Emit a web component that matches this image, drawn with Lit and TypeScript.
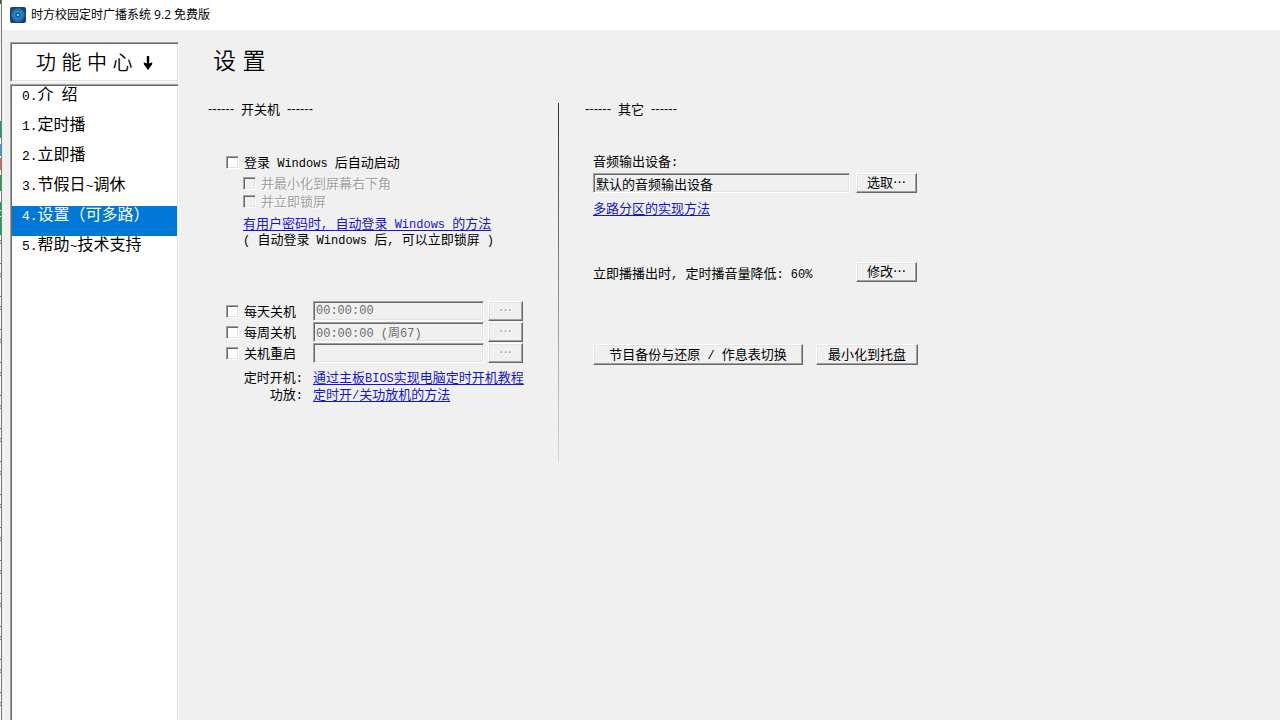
import { LitElement, html, css, TemplateResult } from "lit";
import { customElement, property, state } from "lit/decorators.js";

/** Splits a caption into CJK and ASCII runs, so that ASCII is set in the narrow monospace face. */
const mixed = (text: string): TemplateResult[] =>
  text
    .split(/([\x20-\x7e]+)/)
    .filter((run) => run !== "")
    .map((run) => (/^[\x20-\x7e]/.test(run) ? html`<span class="latin">${run}</span>` : html`<span>${run}</span>`));

const shared = css`
  .latin {
    font-family: "Liberation Mono", monospace;
    font-size: 12px;
    line-height: 1;
    white-space: pre;
  }
  a {
    color: #1414d8;
    text-decoration: underline;
    text-underline-offset: 2px;
  }
`;

@customElement("win-button")
class WinButton extends LitElement {
  @property() label = "";
  @property({ type: Boolean }) disabled = false;

  static styles = [
    shared,
    css`
      :host {
        display: block;
      }
      button {
        display: block;
        width: 100%;
        height: 20px;
        padding: 0 0 2px;
        border: 1px solid;
        border-color: #ffffff #696969 #696969 #ffffff;
        border-radius: 0;
        box-shadow: inset -1px -1px #a0a0a0, inset 1px 1px #e3e3e3;
        background: #f0f0f0;
        color: #000000;
        font: inherit;
        line-height: 16px;
        white-space: nowrap;
      }
      :host(.tall) button {
        height: 21px;
      }
      button:disabled {
        color: #a0a0a0;
        text-shadow: 1px 1px #ffffff;
      }
    `,
  ];

  render() {
    return html`<button type="button" ?disabled=${this.disabled}>${mixed(this.label)}</button>`;
  }
}

@customElement("win-check")
class WinCheck extends LitElement {
  @property() label = "";
  @property({ type: Boolean }) disabled = false;

  static styles = [
    shared,
    css`
      :host {
        display: block;
      }
      label {
        display: flex;
        align-items: center;
        gap: 5px;
        height: 18px;
        white-space: nowrap;
      }
      input {
        appearance: none;
        flex: none;
        width: 13px;
        height: 13px;
        margin: 0;
        border: 1px solid;
        border-color: #a0a0a0 #ffffff #ffffff #a0a0a0;
        box-shadow: inset 1px 1px #696969, inset -1px -1px #e3e3e3;
        background: #ffffff;
      }
      input:checked {
        background: radial-gradient(#000000 3px, #ffffff 4px);
      }
      input:disabled {
        background: #f0f0f0;
      }
      .off {
        color: #a0a0a0;
        text-shadow: 1px 1px #ffffff;
      }
    `,
  ];

  render() {
    return html`<label class=${this.disabled ? "off" : ""}>
      <input type="checkbox" ?disabled=${this.disabled} /><span>${mixed(this.label)}</span>
    </label>`;
  }
}

const MENU = ["0.介 绍", "1.定时播", "2.立即播", "3.节假日~调休", "4.设置（可多路）", "5.帮助~技术支持"];

const SCHEDULE = [
  { label: "每天关机", value: "00:00:00" },
  { label: "每周关机", value: "00:00:00 (周67)" },
  { label: "关机重启", value: "" },
];

@customElement("app-root")
class AppRoot extends LitElement {
  @state() selected = 4;

  static styles = [
    shared,
    css`
      * {
        box-sizing: border-box;
      }
      :host {
        display: flex;
        height: 100vh;
        overflow: hidden;
        background: #f0f0f0;
        color: #000000;
        font-family: "Noto Sans CJK SC", sans-serif;
        font-size: 13px;
        line-height: 16px;
      }
      .edge {
        flex: none;
        width: 2px;
        border-right: 1px solid #7a7a7a;
        background:
          linear-gradient(
            #5a4638 0 4px, #f0f0f0 4px 40px, #d8d8d8 40px 41px, #f4f4f4 41px 121px,
            #00b050 121px 138px, #ffffff 138px 144px, #1eaaf1 144px 156px, #ffffff 156px 158px,
            #f0605c 158px 170px, #ffffff 170px 175px, #00b050 175px 191px, #ffffff 191px 202px,
            #00b050 202px 210px, #ffffff 210px 211px, #00b050 211px 216px, #ffffff 216px 217px,
            #00b050 217px 235px, transparent 235px
          ),
          repeating-linear-gradient(
            #f4f4f4 0 9px, #8c8c8c 9px 10px, #d0d0d0 10px 12px, #8c8c8c 12px 13px,
            #f4f4f4 13px 32px, #707070 32px 33px
          );
      }
      .window {
        flex: 1;
        min-width: 0;
        display: flex;
        flex-direction: column;
      }
      .titlebar {
        flex: none;
        display: flex;
        align-items: center;
        gap: 5px;
        height: 30px;
        padding-left: 8px;
        background: #ffffff;
        font-family: "Open Sans", "Noto Sans CJK SC", sans-serif;
        font-size: 12px;
      }
      .logo {
        width: 16px;
        height: 16px;
      }
      .body {
        flex: 1;
        min-height: 0;
        display: flex;
        padding: 12px 0 0 8px;
      }
      .side {
        flex: none;
        width: 169px;
        display: flex;
        flex-direction: column;
        gap: 2px;
      }
      .sunken {
        border: 1px solid;
        border-color: #a0a0a0 #ffffff #ffffff #a0a0a0;
        box-shadow: inset 1px 1px #696969, inset -1px -1px #e3e3e3;
      }
      .center {
        height: 40px;
        margin: 0;
        padding-top: 6px;
        background: #ffffff;
        font-family: "Liberation Sans", "Noto Sans CJK SC", sans-serif;
        font-size: 20px;
        font-weight: 350;
        line-height: 28px;
        text-align: center;
      }
      .arrow {
        width: 10px;
        height: 14px;
        margin-left: 5px;
      }
      .menu {
        flex: 1;
        margin: 0 0 -2px;
        padding: 1px;
        background: #ffffff;
        list-style: none;
      }
      .item {
        display: block;
        width: 100%;
        height: 30px;
        padding: 0 0 16px 10px;
        border: 0;
        background: none;
        color: #000000;
        font: inherit;
        font-size: 16px;
        line-height: 14px;
        text-align: left;
        white-space: nowrap;
      }
      .item .latin {
        font-size: 13px;
      }
      .item.on {
        background: #0078d7;
        color: #ffffff;
      }
      .content {
        flex: 1;
        min-width: 0;
        padding-left: 29px;
      }
      .heading {
        margin: 0;
        padding: 3px 0 0 5px;
        font-family: "Liberation Sans", "Noto Sans CJK SC", sans-serif;
        font-size: 23px;
        font-weight: 350;
        line-height: 32px;
      }
      .columns {
        display: flex;
        margin-top: 26px;
      }
      .power {
        width: 350px;
        height: 359px;
      }
      .rule {
        width: 1px;
        background: linear-gradient(#303030, #808080 45%, #d8d8d8);
      }
      .other {
        flex: 1;
        padding-left: 26px;
      }
      .legend {
        display: flex;
        gap: 7px;
        margin: 0;
        font-size: 13px;
        font-weight: 400;
        line-height: 12px;
      }
      .legend .latin {
        font-family: "Liberation Sans", sans-serif;
        font-size: 13px;
        line-height: 12px;
      }
      .login {
        padding: 38px 0 0 18px;
      }
      .nested {
        padding: 3px 0 0 17px;
      }
      .hint {
        margin: 0;
        white-space: nowrap;
      }
      .nested .link {
        display: block;
        margin-top: 5px;
        white-space: nowrap;
      }
      .rows {
        display: grid;
        grid-template-columns: 83px 171px 35px;
        column-gap: 4px;
        row-gap: 1px;
        grid-auto-rows: 20px;
        align-items: center;
        padding: 54px 0 0 18px;
      }
      .field {
        width: 100%;
        height: 20px;
        padding: 0 2px;
        border-radius: 0;
        background: #f0f0f0;
        color: #000000;
        font: inherit;
      }
      .field:disabled {
        color: #6d6d6d;
      }
      .time {
        font-family: "Liberation Mono", "Noto Sans CJK SC", monospace;
        font-size: 12px;
      }
      .guides {
        display: grid;
        grid-template-columns: 95px auto;
        column-gap: 10px;
        row-gap: 1px;
        margin: 6px 0 0;
      }
      .guides dt {
        text-align: right;
      }
      .guides dd {
        margin: 0;
        white-space: nowrap;
      }
      .settings {
        width: 332px;
        padding: 38px 0 0 8px;
      }
      .device {
        display: grid;
        grid-template-columns: 1fr 61px;
        column-gap: 6px;
        row-gap: 4px;
      }
      .wide {
        grid-column: 1 / -1;
      }
      .partition {
        display: block;
        margin-top: 7px;
      }
      .volume {
        display: grid;
        grid-template-columns: 1fr 61px;
        margin-top: 46px;
      }
      .volume .hint {
        padding-top: 3px;
      }
      .actions {
        display: grid;
        grid-template-columns: 210px 102px;
        gap: 13px;
        margin-top: 62px;
      }
    `,
  ];

  render() {
    return html`
      <div class="edge"></div>
      <div class="window">
        <header class="titlebar">
          <svg class="logo" viewBox="0 0 16 16" aria-hidden="true">
            <rect width="16" height="16" rx="2" fill="#1c3f7c" />
            <circle cx="8" cy="8" r="6.2" fill="#1b6fae" stroke="#2583be" />
            <circle cx="8" cy="8" r="3.6" fill="#175a99" stroke="#37a3d6" />
            <circle cx="8" cy="8" r="1.3" fill="#6cc6ea" />
          </svg>
          <span>时方校园定时广播系统 9.2 免费版</span>
        </header>
        <div class="body">
          <nav class="side">
            <h2 class="center sunken">功 能 中 心 <svg class="arrow" viewBox="0 0 10 14" aria-hidden="true">
                <path d="M3.8 0h2.4v7.5l3-1.2v2L5 14 .8 8.3v-2l3 1.2z" />
              </svg></h2>
            <ul class="menu sunken">
              ${MENU.map(
                (name, i) => html`<li>
                  <button type="button" class="item ${i === this.selected ? "on" : ""}" @click=${() => (this.selected = i)}>${mixed(name)}</button>
                </li>`,
              )}
            </ul>
          </nav>
          <main class="content">
            <h1 class="heading">设 置</h1>
            <div class="columns">
              <section class="power">
                <h3 class="legend">${["------", "开关机", "------"].map(mixed)}</h3>
                <div class="login">
                  <win-check label="登录 Windows 后自动启动"></win-check>
                  <div class="nested">
                    <win-check label="并最小化到屏幕右下角" disabled></win-check>
                    <win-check label="并立即锁屏" disabled></win-check>
                    <a class="link" href="#login">${mixed("有用户密码时, 自动登录 Windows 的方法")}</a>
                    <p class="hint">${mixed("( 自动登录 Windows 后, 可以立即锁屏 )")}</p>
                  </div>
                </div>
                <div class="rows">
                  ${SCHEDULE.map(
                    (row) => html`
                      <win-check label=${row.label}></win-check>
                      <input class="field time sunken" type="text" aria-label=${row.label} .value=${row.value} disabled />
                      <win-button label="…" disabled></win-button>
                    `,
                  )}
                </div>
                <dl class="guides">
                  <dt>${mixed("定时开机:")}</dt>
                  <dd><a href="#bios">${mixed("通过主板BIOS实现电脑定时开机教程")}</a></dd>
                  <dt>${mixed("功放:")}</dt>
                  <dd><a href="#amplifier">${mixed("定时开/关功放机的方法")}</a></dd>
                </dl>
              </section>
              <div class="rule"></div>
              <section class="other">
                <h3 class="legend">${["------", "其它", "------"].map(mixed)}</h3>
                <div class="settings">
                  <div class="device">
                    <label class="wide" for="device">${mixed("音频输出设备:")}</label>
                    <input id="device" class="field sunken" type="text" value="默认的音频输出设备" readonly />
                    <win-button label="选取…"></win-button>
                  </div>
                  <a class="partition" href="#partition">多路分区的实现方法</a>
                  <div class="volume">
                    <p class="hint">${mixed("立即播播出时, 定时播音量降低: 60%")}</p>
                    <win-button label="修改…"></win-button>
                  </div>
                  <div class="actions">
                    <win-button class="tall" label="节目备份与还原 / 作息表切换"></win-button>
                    <win-button class="tall" label="最小化到托盘"></win-button>
                  </div>
                </div>
              </section>
            </div>
          </main>
        </div>
      </div>
    `;
  }
}
